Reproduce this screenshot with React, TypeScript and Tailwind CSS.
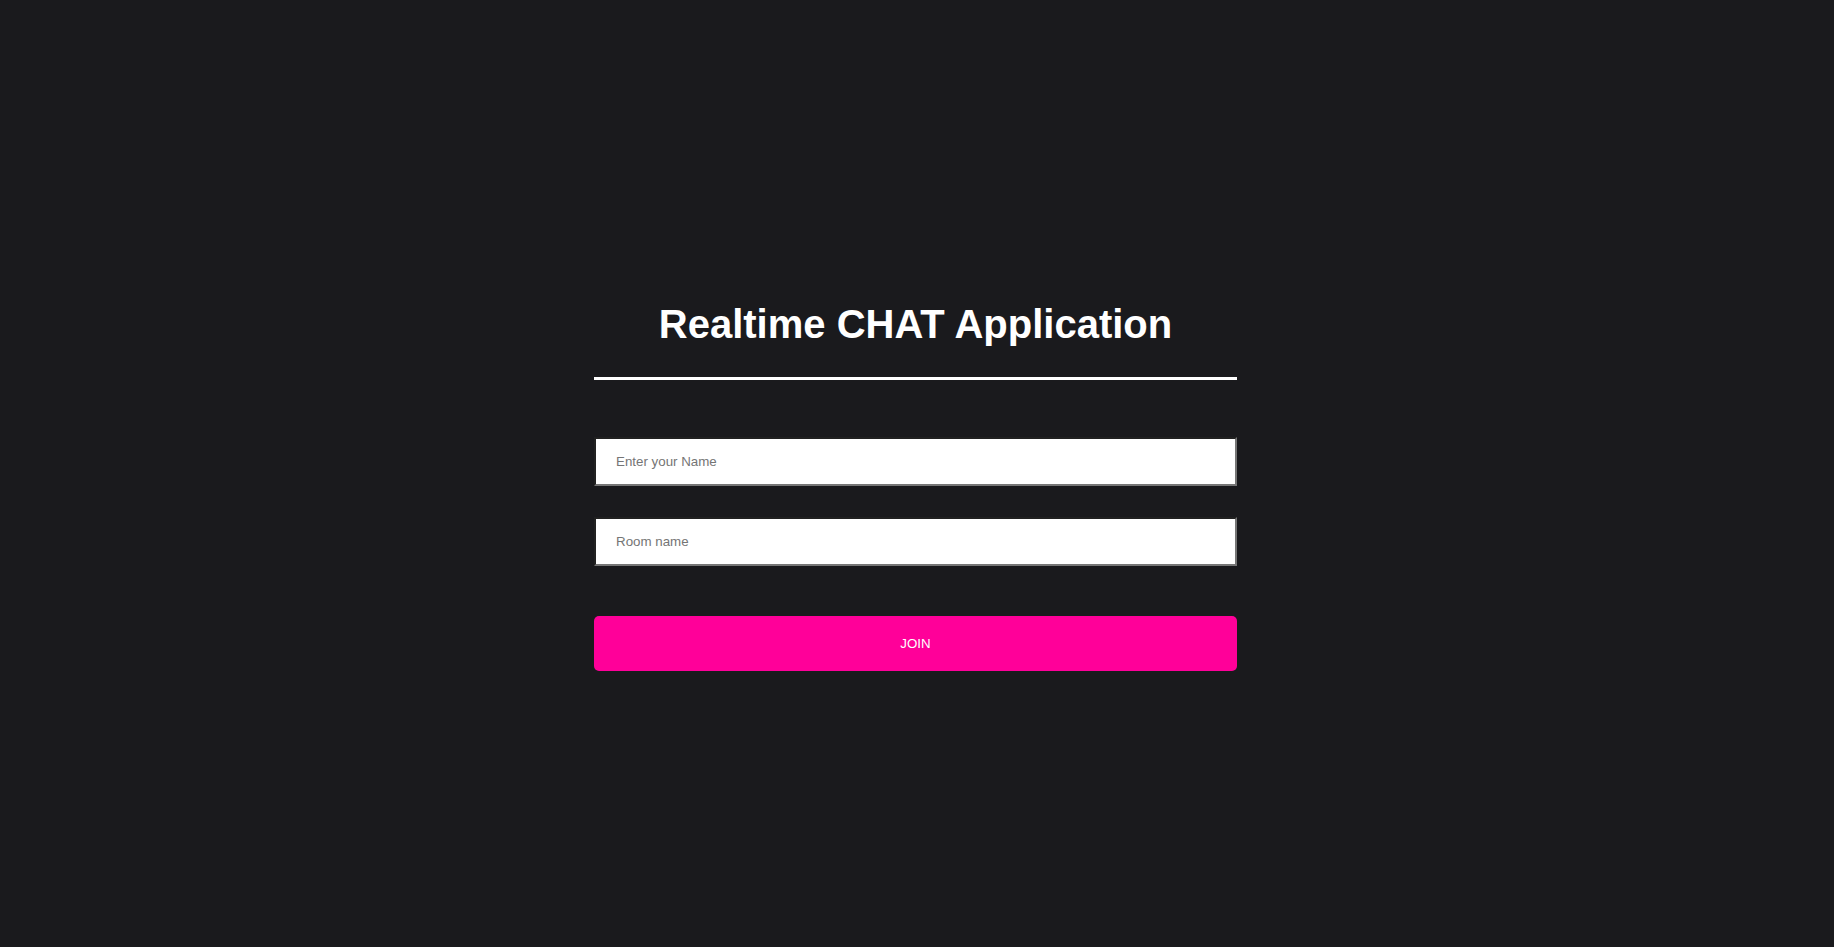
import { useState } from "react";

const App = () => {
  const [name, setName] = useState("");
  const [room, setRoom] = useState("");

  return (
    <div className="min-h-screen w-full bg-[#1a1a1d] font-['Liberation_Sans',Arial,sans-serif]">
      <div className="flex justify-center pt-[301px] pr-[3px]">
        <div className="w-[643px]">
          {/* Heading */}
          <h1 className="text-white text-[40px] leading-[46px] font-bold text-center pb-[30px] border-b-[3px] border-white">
            Realtime CHAT Application
          </h1>

          {/* Inputs */}
          <div className="mt-[57px]">
            <input
              placeholder="Enter your Name"
              className="block w-full bg-white text-[13.333px] leading-[15px] px-5 py-[15px] border-2 border-[#767676] [border-style:inset] rounded-none text-black placeholder:text-[#757575] outline-none"
              type="text"
              value={name}
              onChange={(e) => setName(e.target.value)}
            />
          </div>
          <div className="mt-[31px]">
            <input
              placeholder="Room name"
              className="block w-full bg-white text-[13.333px] leading-[15px] px-5 py-[15px] border-2 border-[#767676] [border-style:inset] rounded-none text-black placeholder:text-[#757575] outline-none"
              type="text"
              value={room}
              onChange={(e) => setRoom(e.target.value)}
            />
          </div>

          {/* Join */}
          <button
            type="submit"
            className="mt-[50px] block w-full h-[55px] rounded-[5px] bg-[#ff0099] text-white text-[13.333px] uppercase"
          >
            Join
          </button>
        </div>
      </div>
    </div>
  );
};

export default App;
